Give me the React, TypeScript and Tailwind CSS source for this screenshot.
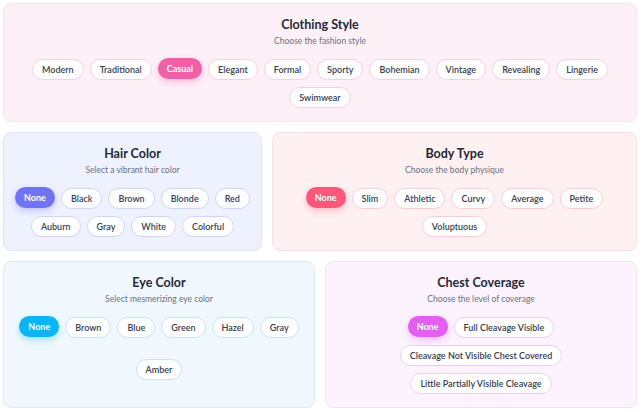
import { useState } from 'react'

type Theme = {
  card: string
  pill: string
  active: string
}

const pink: Theme = {
  card: 'bg-[#fdf0f6] border-[#fbe3ee]',
  pill: 'border-[#f8cfe1]',
  active: 'bg-[#f35fa6] shadow-[0_3px_6px_rgba(243,95,166,0.35)]',
}
const indigo: Theme = {
  card: 'bg-[#eef1fe] border-[#e0e5fb]',
  pill: 'border-[#cfd5f7]',
  active: 'bg-[#6f74f5] shadow-[0_3px_6px_rgba(111,116,245,0.35)]',
}
const rose: Theme = {
  card: 'bg-[#fff0f2] border-[#fde0e5]',
  pill: 'border-[#f8cdd6]',
  active: 'bg-[#f9587a] shadow-[0_3px_6px_rgba(249,88,122,0.35)]',
}
const sky: Theme = {
  card: 'bg-[#f0f8fe] border-[#dcedfa]',
  pill: 'border-[#c6e3f5]',
  active: 'bg-[#0bb4f5] shadow-[0_3px_6px_rgba(11,180,245,0.35)]',
}
const fuchsia: Theme = {
  card: 'bg-[#fcf3fe] border-[#f4e2f8]',
  pill: 'border-[#efcdf5]',
  active: 'bg-[#e25ff0] shadow-[0_3px_6px_rgba(226,95,240,0.35)]',
}

function Section({
  title,
  subtitle,
  options,
  initial,
  theme,
}: {
  title: string
  subtitle: string
  options: string[]
  initial: string
  theme: Theme
}) {
  const [value, setValue] = useState(initial)
  return (
    <div className={`flex flex-col rounded-lg border px-[10px] pt-[13px] pb-[13px] ${theme.card}`}>
      <h3 className="text-center text-[12.5px] font-bold leading-[16px] text-[#1f2937]">{title}</h3>
      <p className="mt-[2px] text-center text-[8.5px] leading-[12px] text-[#6b7280]">{subtitle}</p>
      <div className="mt-[12px] flex flex-1 flex-wrap content-stretch items-start justify-center gap-x-[6px] gap-y-[7px]">
        {options.map((o) => {
          const on = o === value
          return (
            <button
              key={o}
              onClick={() => setValue(o)}
              className={
                on
                  ? `h-[21px] rounded-full px-[9px] text-[9px] font-bold text-white -translate-y-px ${theme.active}`
                  : `h-[21px] rounded-full border bg-white px-[9px] text-[9px] font-semibold text-[#374151] ${theme.pill}`
              }
            >
              {o}
            </button>
          )
        })}
      </div>
    </div>
  )
}

export default function App() {
  return (
    <div className="w-[637px] bg-white pl-[3px] pt-[3px] font-['Lato',sans-serif]">
      <Section
        title="Clothing Style"
        subtitle="Choose the fashion style"
        options={['Modern', 'Traditional', 'Casual', 'Elegant', 'Formal', 'Sporty', 'Bohemian', 'Vintage', 'Revealing', 'Lingerie', 'Swimwear']}
        initial="Casual"
        theme={pink}
      />

      <div className="mt-[10px] grid grid-cols-[259px_1fr] gap-[10px]">
        <Section
          title="Hair Color"
          subtitle="Select a vibrant hair color"
          options={['None', 'Black', 'Brown', 'Blonde', 'Red', 'Auburn', 'Gray', 'White', 'Colorful']}
          initial="None"
          theme={indigo}
        />
        <Section
          title="Body Type"
          subtitle="Choose the body physique"
          options={['None', 'Slim', 'Athletic', 'Curvy', 'Average', 'Petite', 'Voluptuous']}
          initial="None"
          theme={rose}
        />
      </div>

      <div className="mt-[10px] grid grid-cols-2 gap-[10px]">
        <Section
          title="Eye Color"
          subtitle="Select mesmerizing eye color"
          options={['None', 'Brown', 'Blue', 'Green', 'Hazel', 'Gray', 'Amber']}
          initial="None"
          theme={sky}
        />
        <Section
          title="Chest Coverage"
          subtitle="Choose the level of coverage"
          options={['None', 'Full Cleavage Visible', 'Cleavage Not Visible Chest Covered', 'Little Partially Visible Cleavage']}
          initial="None"
          theme={fuchsia}
        />
      </div>
    </div>
  )
}
